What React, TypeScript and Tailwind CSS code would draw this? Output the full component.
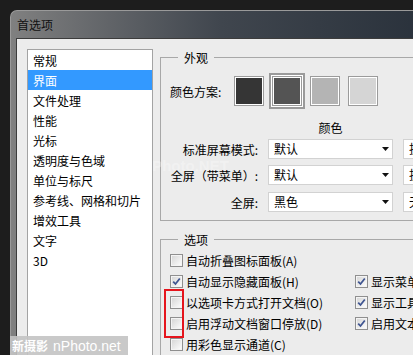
import React from "react";

const font = { fontFamily: '"Noto Sans CJK SC", "Noto Sans", sans-serif' };

function Arrow() {
  return (
    <svg width="7" height="4" viewBox="0 0 7 4" className="shrink-0">
      <path d="M0 0 H7 L3.5 4 Z" fill="#111" />
    </svg>
  );
}

function Select({ text }: { text: string }) {
  return (
    <div className="h-[20px] w-[125px] bg-white border border-[#d2d2d2] flex items-center pl-[5px] pr-[3px] text-[12px] leading-[18px] text-black">
      <span className="flex-1 whitespace-nowrap overflow-hidden">{text}</span>
      <Arrow />
    </div>
  );
}

function Check({ checked, label }: { checked?: boolean; label: string }) {
  return (
    <div className="h-[21px] flex items-center whitespace-nowrap">
      <span className="w-[13px] h-[13px] shrink-0 border border-[#8f8f8f] bg-[#f4f4f4] p-[1px] flex">
        <span className="flex-1 bg-gradient-to-br from-[#d8d8d8] to-[#fbfbfb] flex items-center justify-center">
          {checked && (
            <svg width="9" height="9" viewBox="0 0 9 9">
              <path d="M1.2 4.6 L3.5 7 L7.8 1.5" fill="none" stroke="#3f5591" strokeWidth="1.8" />
            </svg>
          )}
        </span>
      </span>
      <span className="ml-[3px] text-[12px] leading-[17px] text-black">{label}</span>
    </div>
  );
}

function Swatch({ color, selected }: { color: string; selected?: boolean }) {
  return (
    <div
      className={
        "w-[30px] h-[30px] border border-[#9b9b9b] p-[1px] bg-white " +
        (selected ? "shadow-[0_0_0_1px_#ffffff,0_0_0_3px_#9a9a9a]" : "")
      }
    >
      <div className="w-full h-full" style={{ backgroundColor: color }} />
    </div>
  );
}

const items = [
  "常规",
  "界面",
  "文件处理",
  "性能",
  "光标",
  "透明度与色域",
  "单位与标尺",
  "参考线、网格和切片",
  "增效工具",
  "文字",
  "3D",
];

export default function App() {
  return (
    <div
      className="relative w-[413px] h-[355px] overflow-hidden bg-[#1d1d1d] pt-[10px] pl-[10px]"
      style={font}
    >
      <div className="w-[420px] h-[360px] rounded-tl-[7px] border-l border-t border-[#9a9a9a] bg-gradient-to-r from-[#808080] via-[#40464e] to-[#29313b] flex flex-col">
        <div className="h-[27px] shrink-0 flex items-center pl-[6px] text-[12px] leading-[17px] text-[#111]">
          首选项
        </div>
        <div className="ml-[5px] flex-1 bg-[#ececec] border-l border-t border-[#3c3c3c] flex items-start pt-[10px] pl-[10px]">
          <div className="w-[126px] h-[320px] shrink-0 bg-white border border-[#a3a3a3]">
            {items.map((t) => (
              <div
                key={t}
                className={
                  "h-[20px] pl-[5px] flex items-center text-[12px] leading-[17px] whitespace-nowrap " +
                  (t === "界面" ? "bg-[#3399ff] text-white" : "text-black")
                }
              >
                {t}
              </div>
            ))}
          </div>

          <div className="ml-[7px] w-[330px] shrink-0 flex flex-col">
            <fieldset className="border border-[#a8a8a8] pb-[8px]">
              <legend className="ml-[17px] px-[6px] text-[12px] leading-[17px] text-black">外观</legend>
              <div className="mt-[7px] h-[36px] pl-[9px] flex items-center">
                <span className="w-[64px] text-[12px] leading-[17px] text-black whitespace-nowrap">颜色方案:</span>
                <div className="flex items-center gap-[8px]">
                  <Swatch color="#353535" />
                  <Swatch color="#545454" selected />
                  <Swatch color="#b4b4b4" />
                  <Swatch color="#d5d5d5" />
                </div>
              </div>
              <div className="mt-[10px] grid grid-cols-[97px_125px_125px] gap-x-[10px] text-[12px] leading-[17px] text-black">
                <span />
                <span className="text-center">颜色</span>
                <span />
              </div>
              <div className="mt-[3px] flex flex-col gap-y-[6px] text-[12px] leading-[17px] text-black">
                <div className="grid grid-cols-[97px_125px_125px] gap-x-[10px] items-center">
                  <span className="text-right whitespace-nowrap">标准屏幕模式:</span>
                  <Select text="默认" />
                  <Select text="投影" />
                </div>
                <div className="grid grid-cols-[97px_125px_125px] gap-x-[10px] items-center">
                  <span className="text-right whitespace-nowrap">全屏（带菜单）:</span>
                  <Select text="默认" />
                  <Select text="投影" />
                </div>
                <div className="mt-[1px] grid grid-cols-[97px_125px_125px] gap-x-[10px] items-center">
                  <span className="text-right whitespace-nowrap">全屏:</span>
                  <Select text="黑色" />
                  <Select text="无" />
                </div>
              </div>
            </fieldset>

            <fieldset className="mt-[10px] border border-[#a8a8a8] h-[140px]">
              <legend className="ml-[17px] px-[6px] text-[12px] leading-[17px] text-black">选项</legend>
              <div className="mt-[2px] pl-[9px] grid grid-cols-[185px_1fr]">
                <Check label="自动折叠图标面板(A)" />
                <span />
                <Check checked label="自动显示隐藏面板(H)" />
                <Check checked label="显示菜单颜色" />
                <Check label="以选项卡方式打开文档(O)" />
                <Check checked label="显示工具提示" />
                <Check label="启用浮动文档窗口停放(D)" />
                <Check checked label="启用文本投影" />
                <Check label="用彩色显示通道(C)" />
                <span />
              </div>
            </fieldset>
          </div>
        </div>
      </div>

      {/* annotation */}
      <div className="absolute left-[164px] top-[289px] w-[20px] h-[49px] border-2 border-[#e5141c]" />

      {/* watermarks */}
      <div className="absolute left-[143px] top-[155px] text-[15px] font-bold text-white/30 whitespace-nowrap pointer-events-none" style={{ fontFamily: '"Liberation Sans", sans-serif' }}>
        nPhoto.NET
      </div>
      <div className="absolute left-[10px] top-[336px] w-[118px] h-[19px] bg-[#c3c3c3]/90 flex items-center pl-[2px] text-white whitespace-nowrap">
        <span className="text-[12px] font-bold leading-[16px]">新摄影</span>
        <span className="ml-[5px] text-[14px] leading-[16px]" style={{ fontFamily: '"Liberation Sans", sans-serif' }}>nPhoto.net</span>
      </div>
    </div>
  );
}
